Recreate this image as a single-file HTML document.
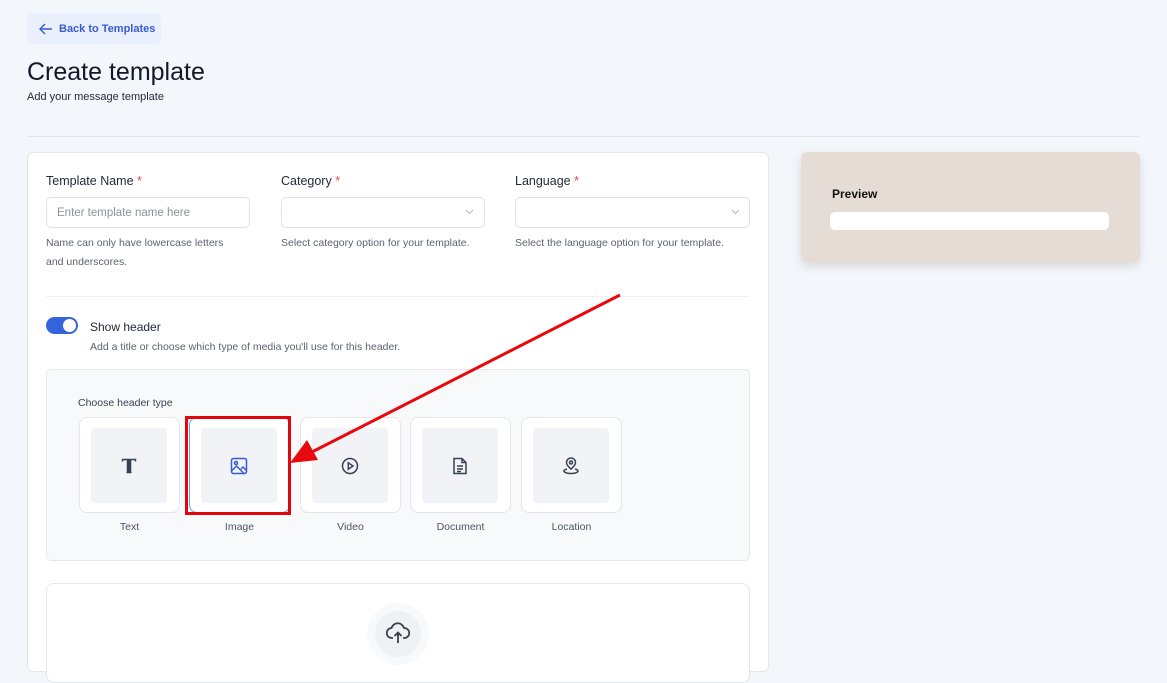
<!DOCTYPE html>
<html><head><meta charset="utf-8"><style>
*{box-sizing:border-box;margin:0;padding:0}
body{width:1167px;height:661px;overflow:hidden;background:#f3f6fa;font-family:"Liberation Sans",sans-serif;color:#1f2937;position:relative}
.a{position:absolute}
.back{left:27px;top:13px;width:134px;height:31px;background:#eaf0fb;border-radius:6px;color:#3a5bd0;font-size:11px;font-weight:bold;display:flex;align-items:center;padding-left:12px;gap:6px}
.card{left:27px;top:152px;width:742px;height:520px;background:#fff;border:1px solid #e5e7eb;border-radius:6px}
.lbl{font-size:12.5px;color:#1f2937}
.lbl b{color:#e5484d;font-weight:normal}
.inp{height:31px;border:1px solid #dfe2e7;border-radius:5px;background:#fff;font-size:11.5px;color:#8b929c;padding:9px 10px}
.help{font-size:10.5px;color:#5b6270;line-height:19px}
.tile{top:417px;width:101px;height:96px;background:#fff;border:1px solid #e3e6eb;border-radius:8px}
.tile i{position:absolute;left:11px;top:10px;width:76px;height:75px;background:#f2f3f6;border-radius:4px;display:flex;align-items:center;justify-content:center;font-style:normal}
.tl{top:521px;width:101px;text-align:center;font-size:10.5px;color:#4b5563}
</style></head><body>
<div class="a back"><svg width="14" height="12" viewBox="0 0 14 12"><path d="M13 6H1M6 1L1 6l5 5" fill="none" stroke="#3a5bd0" stroke-width="1.4"/></svg>Back to Templates</div>
<div class="a" style="left:27px;top:58px;font-size:25px;color:#111827">Create template</div>
<div class="a" style="left:27px;top:91px;font-size:11px;color:#1f2937">Add your message template</div>
<div class="a" style="left:27px;top:136px;width:1112px;height:1px;background:#e3e7ec"></div>
<div class="a card"></div>
<div class="a lbl" style="left:46px;top:174px">Template Name <b>*</b></div>
<div class="a lbl" style="left:281px;top:174px">Category <b>*</b></div>
<div class="a lbl" style="left:515px;top:174px">Language <b>*</b></div>
<div class="a inp" style="left:46px;top:197px;width:204px">Enter template name here</div>
<div class="a inp" style="left:281px;top:197px;width:204px"></div>
<div class="a inp" style="left:515px;top:197px;width:235px"></div>
<svg class="a" style="left:465px;top:209px" width="9" height="6"><path d="M1 1l3.5 3.5L8 1" fill="none" stroke="#b0b5bd"/></svg>
<svg class="a" style="left:731px;top:209px" width="9" height="6"><path d="M1 1l3.5 3.5L8 1" fill="none" stroke="#b0b5bd"/></svg>
<div class="a help" style="left:46px;top:234px">Name can only have lowercase letters<br>and underscores.</div>
<div class="a help" style="left:281px;top:234px">Select category option for your template.</div>
<div class="a help" style="left:515px;top:234px">Select the language option for your template.</div>
<div class="a" style="left:46px;top:296px;width:704px;height:1px;background:#eef0f3"></div>
<div class="a" style="left:46px;top:317px;width:32px;height:17px;background:#3563dc;border-radius:9px"><div style="position:absolute;right:2px;top:2px;width:13px;height:13px;border-radius:50%;background:#fff"></div></div>
<div class="a" style="left:90px;top:320px;font-size:12px">Show header</div>
<div class="a help" style="left:90px;top:338px">Add a title or choose which type of media you'll use for this header.</div>
<div class="a" style="left:46px;top:369px;width:704px;height:192px;background:#f8f9fb;border:1px solid #e5e7eb;border-radius:5px"></div>
<div class="a" style="left:78px;top:397px;font-size:10.5px;color:#374151">Choose header type</div>
<div class="a tile" style="left:79px"><i><svg width="16" height="16" viewBox="0 0 16 16" fill="none" stroke="#374151" stroke-width="1.5"><path d="M1.5 3.5V1.5h13v2M8 1.5v13M5.5 14.5h5M6.5 1.5v13M9.5 1.5v13"/></svg></i></div>
<div class="a tile" style="left:189px;border-color:#7b95e6"><i><svg width="18" height="18" viewBox="0 0 18 18" fill="none" stroke="#3a5bd0" stroke-width="1.5"><rect x="1.5" y="1.5" width="15" height="15" rx="2"/><circle cx="6" cy="6" r="1.5"/><path d="M1.5 14l5-5 8 8M11 12l2-2 3.5 3.5"/></svg></i></div>
<div class="a tile" style="left:300px"><i><svg width="18" height="18" viewBox="0 0 18 18" fill="none" stroke="#374151" stroke-width="1.5"><circle cx="9" cy="9" r="7.5"/><path d="M7.3 5.8v6.4L12 9z"/></svg></i></div>
<div class="a tile" style="left:410px"><i><svg width="16" height="18" viewBox="0 0 16 18" fill="none" stroke="#374151" stroke-width="1.5"><path d="M2 1.5h8l4 4v11H2z M10 1.5v4h4M5 9h6M5 12h6M5 14.5h4"/></svg></i></div>
<div class="a tile" style="left:521px"><i><svg width="18" height="18" viewBox="0 0 18 18" fill="none" stroke="#374151" stroke-width="1.5"><path d="M9 12S4.5 8.5 4.5 5.5a4.5 4.5 0 019 0C13.5 8.5 9 12 9 12z"/><circle cx="9" cy="5.5" r="1.5"/><path d="M5 12c-2 .5-3 1.3-3 2 0 1.4 3.1 2.5 7 2.5s7-1.1 7-2.5c0-.7-1-1.5-3-2"/></svg></i></div>
<div class="a tl" style="left:79px">Text</div>
<div class="a tl" style="left:189px">Image</div>
<div class="a tl" style="left:300px">Video</div>
<div class="a tl" style="left:410px">Document</div>
<div class="a tl" style="left:521px">Location</div>
<div class="a" style="left:185px;top:416px;width:106px;height:99px;border:3px solid #e0060c"></div>
<svg class="a" style="left:0;top:0" width="1167" height="661"><line x1="620" y1="295" x2="310" y2="453" stroke="#e8090f" stroke-width="3"/><path d="M290 463l17-23 11 20z" fill="#e8090f"/></svg>
<div class="a" style="left:46px;top:583px;width:704px;height:100px;background:#fff;border:1px solid #e3e6eb;border-radius:8px"></div>
<div class="a" style="left:367px;top:603px;width:62px;height:62px;border-radius:50%;background:#f8f9fb"></div>
<div class="a" style="left:375px;top:611px;width:46px;height:46px;border-radius:50%;background:#f0f1f4"></div>
<svg class="a" style="left:386px;top:622px" width="24" height="22" viewBox="0 0 24 22" fill="none" stroke="#374151" stroke-width="1.8"><path d="M7 16H6a5 5 0 01-.5-10A6.5 6.5 0 0118 6a4.5 4.5 0 01.5 10H17M12 21v-10M8.5 14L12 10.5 15.5 14"/></svg>
<div class="a" style="left:801px;top:152px;width:339px;height:110px;background:#e5ddd5;border-radius:6px;box-shadow:0 4px 10px rgba(0,0,0,.12)"></div>
<div class="a" style="left:832px;top:187px;font-size:12px;font-weight:bold;color:#111">Preview</div>
<div class="a" style="left:830px;top:212px;width:279px;height:18px;background:#fff;border-radius:5px"></div>
</body></html>
